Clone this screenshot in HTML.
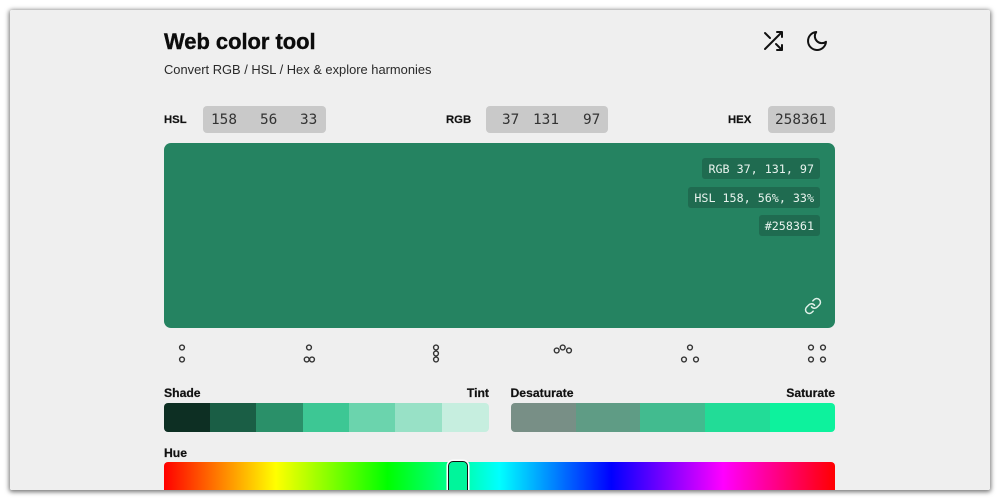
<!DOCTYPE html>
<html><head><meta charset="utf-8"><style>
html,body{margin:0;padding:0;background:#fff}
body{width:1000px;height:500px;overflow:hidden;position:relative;font-family:"Liberation Sans",sans-serif;color:#111}
#win{position:absolute;left:10px;top:10px;width:980px;height:480px;background:#efefef;overflow:hidden;border-radius:2px}
#shadow{position:absolute;left:10px;top:10px;width:980px;height:480px;border-radius:2px;box-shadow:0 1px 5px 1px rgba(0,0,0,.55)}
.a{position:absolute;white-space:nowrap}
.l{font-weight:700;font-size:12.2px;line-height:16px;-webkit-text-stroke:.2px #111}
.s{font-size:11.3px}
.box{position:absolute;top:96px;height:27px;background:#c9c9c9;border-radius:4px;font:14.4px/27px "DejaVu Sans Mono",monospace;color:#333}
.box span{position:absolute;top:1px}
.tag{position:absolute;right:170px;height:21px;background:#1f6b50;border-radius:3px;color:#e8f3ee;font:11.7px/22px "DejaVu Sans Mono",monospace;padding:0 6px}
svg{position:absolute;overflow:visible}
</style></head><body>
<div id="shadow"></div>
<div id="win">
<div class="a" style="left:154px;top:18px;font-size:21.9px;line-height:28px;font-weight:700;color:#0c0c0c;-webkit-text-stroke:.4px #0c0c0c">Web color tool</div>
<div class="a" style="left:154px;top:51px;font-size:12.9px;line-height:18px;color:#2a2a2a">Convert RGB / HSL / Hex &amp; explore harmonies</div>
<svg style="left:751px;top:19px" width="24" height="24" viewBox="0 0 24 24" fill="none" stroke="#111" stroke-width="2" stroke-linecap="round" stroke-linejoin="round"><path d="M16 3h5v5M4 20L21 3M21 16v5h-5M15 15l6 6M4 4l5 5"/></svg>
<svg style="left:795px;top:19px" width="24" height="24" viewBox="0 0 24 24" fill="none" stroke="#111" stroke-width="2" stroke-linecap="round" stroke-linejoin="round"><path d="M21 12.79A9 9 0 1 1 11.21 3 7 7 0 0 0 21 12.79z"/></svg>

<div class="a l s" style="left:154px;top:102px">HSL</div>
<div class="box" style="left:193px;width:123px"><span style="left:8px">158</span><span style="left:57px">56</span><span style="left:97px">33</span></div>
<div class="a l s" style="left:436px;top:102px">RGB</div>
<div class="box" style="left:476px;width:122px"><span style="left:16px">37</span><span style="left:47px">131</span><span style="left:97px">97</span></div>
<div class="a l s" style="left:718px;top:102px">HEX</div>
<div class="box" style="left:758px;width:67px"><span style="left:7px">258361</span></div>

<div class="a" style="left:154px;top:133px;width:671px;height:185px;background:#258361;border-radius:7px"></div>
<div class="tag" style="top:148px">RGB 37, 131, 97</div>
<div class="tag" style="top:177px">HSL 158, 56%, 33%</div>
<div class="tag" style="top:205px">#258361</div>
<svg style="left:794px;top:287px" width="18" height="18" viewBox="0 0 24 24" fill="none" stroke="#dff0e8" stroke-width="2" stroke-linecap="round" stroke-linejoin="round"><path d="M10 13a5 5 0 0 0 7.54.54l3-3a5 5 0 0 0-7.07-7.07l-1.72 1.71"/><path d="M14 11a5 5 0 0 0-7.54-.54l-3 3a5 5 0 0 0 7.07 7.07l1.71-1.71"/></svg>

<svg style="left:0;top:0" width="980" height="480" fill="none" stroke="#333" stroke-width="1.4">
<circle cx="172" cy="337.5" r="2.4"/><circle cx="172" cy="349.5" r="2.4"/>
<circle cx="299" cy="337.5" r="2.4"/><circle cx="296.7" cy="349.5" r="2.4"/><circle cx="302" cy="349.5" r="2.4"/>
<circle cx="426" cy="337.5" r="2.4"/><circle cx="426" cy="343.5" r="2.4"/><circle cx="426" cy="349.5" r="2.4"/>
<circle cx="546.7" cy="340.5" r="2.4"/><circle cx="552.7" cy="337.5" r="2.4"/><circle cx="559" cy="340.5" r="2.4"/>
<circle cx="680" cy="337.5" r="2.4"/><circle cx="674" cy="349.5" r="2.4"/><circle cx="686" cy="349.5" r="2.4"/>
<circle cx="801" cy="337.5" r="2.4"/><circle cx="813" cy="337.5" r="2.4"/><circle cx="801" cy="349.5" r="2.4"/><circle cx="813" cy="349.5" r="2.4"/>
</svg>

<div class="a l" style="left:154px;top:375px">Shade</div>
<div class="a l" style="right:501px;top:375px">Tint</div>
<div class="a l" style="left:500.5px;top:375px">Desaturate</div>
<div class="a l" style="right:155px;top:375px">Saturate</div>

<div class="a" style="left:154px;top:392.5px;width:325px;height:29px;border-radius:4px;overflow:hidden;display:flex">
<i style="width:46px;background:#0d2f23"></i><i style="width:46.3px;background:#1a5e45"></i><i style="width:46.3px;background:#2a9069"></i><i style="width:46.3px;background:#3dc794"></i><i style="width:46.3px;background:#6bd4ad"></i><i style="width:46.8px;background:#98e1c6"></i><i style="width:47px;background:#c6eedf"></i>
</div>
<div class="a" style="left:500.5px;top:392.5px;width:324.5px;height:29px;border-radius:4px;overflow:hidden;display:flex">
<i style="width:65px;background:#788f86"></i><i style="width:64.5px;background:#5f9c85"></i><i style="width:65.2px;background:#42bb8f"></i><i style="width:65px;background:#22dc97"></i><i style="width:64.8px;background:#0df29d"></i>
</div>

<div class="a l" style="left:154px;top:435px">Hue</div>
<div class="a" style="left:154px;top:452px;width:671px;height:40px;border-radius:4px;background:linear-gradient(90deg,#f00 0%,#ff0 16.67%,#0f0 33.33%,#0ff 50%,#00f 66.67%,#f0f 83.33%,#f00 100%)"></div>
<div class="a" style="left:438px;top:451px;width:20px;height:40px;box-sizing:border-box;background:#00f59b;border:1.5px solid #111;border-radius:5px;box-shadow:0 0 0 1.5px #fff"></div>
</div>
</body></html>
